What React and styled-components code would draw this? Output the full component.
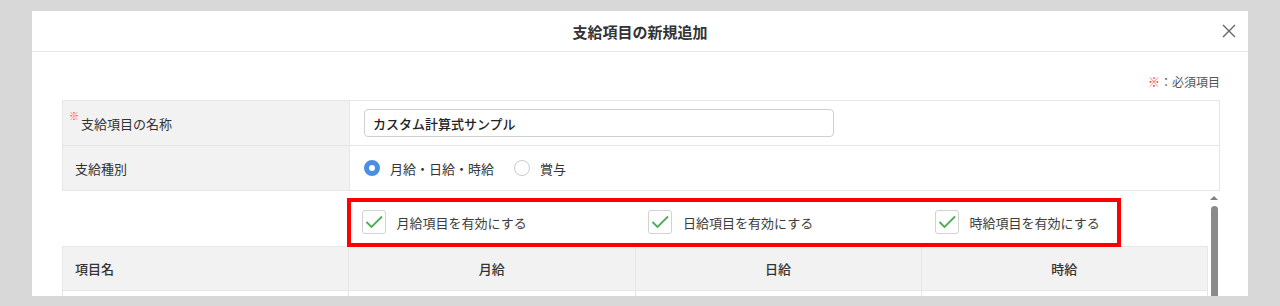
import React from 'react';
import styled, { createGlobalStyle } from 'styled-components';

const colors = {
  backdrop: '#d8d8d8',
  border: '#e6e6e6',
  cell: '#f2f2f2',
  text: '#333333',
  muted: '#555555',
  required: '#ff3b3b',
  blue: '#4a90e2',
  green: '#4cae50',
  highlight: '#ff0000',
};

const GlobalStyle = createGlobalStyle`
  html, body {
    margin: 0;
    padding: 0;
    background: ${colors.backdrop};
  }
  body {
    font-family: "Noto Sans CJK JP", "Noto Sans", sans-serif;
    color: ${colors.text};
  }
`;

const Backdrop = styled.div`
  height: 306px;
  box-sizing: border-box;
  padding: 11px 32px 10px;
  display: flex;
  overflow: hidden;
`;

const Modal = styled.div`
  flex: 1;
  background: #fff;
  display: flex;
  flex-direction: column;
  overflow: hidden;
`;

const Header = styled.header`
  height: 40px;
  flex-shrink: 0;
  display: grid;
  grid-template-columns: 1fr auto 1fr;
  align-items: center;
  border-bottom: 1px solid ${colors.border};
`;

const Title = styled.h2`
  grid-column: 2;
  margin: 0;
  font-size: 15px;
  font-weight: 700;
  color: ${colors.text};
`;

const CloseButton = styled.button`
  grid-column: 3;
  justify-self: end;
  margin-right: 12px;
  width: 14px;
  height: 14px;
  padding: 0;
  border: none;
  background: none;
  display: flex;
`;

const Body = styled.div`
  flex: 1;
  min-height: 0;
  padding: 0 28px 0 30px;
  display: flex;
  flex-direction: column;
`;

const RequiredNote = styled.p`
  margin: 21px 0 9px;
  line-height: 18px;
  font-size: 12px;
  text-align: right;
  color: ${colors.muted};
`;

const Mark = styled.span`
  color: ${colors.required};
  font-size: ${(p) => (p.$small ? '10px' : 'inherit')};
  align-self: ${(p) => (p.$small ? 'flex-start' : 'auto')};
  margin-top: ${(p) => (p.$small ? '10px' : '0')};
  line-height: 1;
`;

const FormTable = styled.div`
  flex-shrink: 0;
  border: 1px solid ${colors.border};
`;

const FormRow = styled.div`
  display: grid;
  grid-template-columns: 287px 1fr;
  height: 44px;
  & + & {
    border-top: 1px solid ${colors.border};
  }
`;

const Label = styled.div`
  background: ${colors.cell};
  border-right: 1px solid ${colors.border};
  display: flex;
  align-items: center;
  padding-left: ${(p) => (p.$required ? '6px' : '12px')};
  gap: 2px;
  font-size: 13px;
  color: ${colors.text};
`;

const Value = styled.div`
  display: flex;
  align-items: center;
  padding-left: 14px;
`;

const TextInput = styled.input`
  width: 470px;
  height: 28px;
  box-sizing: border-box;
  border: 1px solid #cfcfcf;
  border-radius: 4px;
  padding: 0 8px;
  font-family: inherit;
  font-size: 13px;
  font-weight: 500;
  color: #222;
  outline: none;
`;

const RadioGroup = styled.div`
  display: flex;
  align-items: center;
  gap: 20px;
`;

const RadioLabel = styled.label`
  display: flex;
  align-items: center;
  gap: 10px;
  font-size: 13px;
  color: ${colors.text};
`;

const RadioDot = styled.span`
  width: 16px;
  height: 16px;
  box-sizing: border-box;
  border-radius: 50%;
  border: ${(p) => (p.$checked ? `5px solid ${colors.blue}` : '1px solid #cbcbcb')};
  background: #fff;
`;

const ScrollArea = styled.div`
  flex: 1;
  min-height: 0;
  display: flex;
  padding-top: 7px;
  overflow: hidden;
`;

const ScrollContent = styled.div`
  flex: 1;
  display: flex;
  flex-direction: column;
`;

const CheckRow = styled.div`
  position: relative;
  flex-shrink: 0;
  display: grid;
  grid-template-columns: repeat(4, 1fr);
  height: 48px;
`;

const Highlight = styled.div`
  position: absolute;
  left: calc(25% - 2px);
  top: 0;
  width: 774px;
  height: 49px;
  box-sizing: border-box;
  border: 4px solid ${colors.highlight};
  pointer-events: none;
`;

const CheckCell = styled.label`
  display: flex;
  align-items: center;
  gap: 11px;
  padding-left: 13px;
  font-size: 13px;
  color: #3c3c3c;
`;

const CheckBox = styled.span`
  width: 24px;
  height: 24px;
  box-sizing: border-box;
  border: 1px solid #d2d2d2;
  border-radius: 3px;
  background: #fff;
  display: flex;
  align-items: center;
  justify-content: center;
`;

const GridTable = styled.div`
  flex-shrink: 0;
  display: grid;
  grid-template-columns: repeat(4, 1fr);
  border-top: 1px solid ${colors.border};
  border-left: 1px solid ${colors.border};
`;

const HeadCell = styled.div`
  height: 43px;
  background: ${colors.cell};
  border-right: 1px solid ${colors.border};
  border-bottom: 1px solid ${colors.border};
  display: flex;
  align-items: center;
  justify-content: ${(p) => (p.$left ? 'flex-start' : 'center')};
  padding-left: ${(p) => (p.$left ? '12px' : '0')};
  font-size: 13px;
  font-weight: 500;
  color: ${colors.text};
`;

const BodyCell = styled.div`
  height: 40px;
  background: #fff;
  border-right: 1px solid ${colors.border};
  border-bottom: 1px solid ${colors.border};
`;

const ScrollBar = styled.div`
  width: 12px;
  margin-top: -5px;
  display: flex;
  flex-direction: column;
  align-items: center;
`;

const ScrollArrow = styled.span`
  margin-top: 3px;
  width: 0;
  height: 0;
  border-left: 4px solid transparent;
  border-right: 4px solid transparent;
  border-bottom: 4px solid #808080;
`;

const ScrollThumb = styled.span`
  margin-top: 6px;
  width: 7px;
  flex: 1;
  background: #8a8a8a;
  border-radius: 4px 4px 0 0;
`;

function CheckIcon() {
  return (
    <svg width="20" height="20" viewBox="0 0 20 20">
      <polyline
        points="2.5,10 7.5,15 18,4.5"
        fill="none"
        stroke={colors.green}
        strokeWidth="1.8"
      />
    </svg>
  );
}

function CloseIcon() {
  return (
    <svg width="14" height="14" viewBox="0 0 14 14">
      <path d="M1 1 L13 13 M13 1 L1 13" stroke="#666" strokeWidth="1.4" />
    </svg>
  );
}

const toggles = ['月給項目を有効にする', '日給項目を有効にする', '時給項目を有効にする'];
const columns = ['項目名', '月給', '日給', '時給'];

function App() {
  return (
    <>
      <GlobalStyle />
      <Backdrop>
        <Modal>
          <Header>
            <Title>支給項目の新規追加</Title>
            <CloseButton aria-label="閉じる">
              <CloseIcon />
            </CloseButton>
          </Header>
          <Body>
            <RequiredNote>
              <Mark>※</Mark>：必須項目
            </RequiredNote>
            <FormTable>
              <FormRow>
                <Label $required>
                  <Mark $small>※</Mark>
                  支給項目の名称
                </Label>
                <Value>
                  <TextInput defaultValue="カスタム計算式サンプル" />
                </Value>
              </FormRow>
              <FormRow>
                <Label>支給種別</Label>
                <Value>
                  <RadioGroup>
                    <RadioLabel>
                      <RadioDot $checked />
                      月給・日給・時給
                    </RadioLabel>
                    <RadioLabel>
                      <RadioDot />
                      賞与
                    </RadioLabel>
                  </RadioGroup>
                </Value>
              </FormRow>
            </FormTable>
            <ScrollArea>
              <ScrollContent>
                <CheckRow>
                  <div />
                  {toggles.map((t) => (
                    <CheckCell key={t}>
                      <CheckBox>
                        <CheckIcon />
                      </CheckBox>
                      {t}
                    </CheckCell>
                  ))}
                  <Highlight />
                </CheckRow>
                <GridTable>
                  {columns.map((c, i) => (
                    <HeadCell key={c} $left={i === 0}>
                      {c}
                    </HeadCell>
                  ))}
                  {columns.map((c) => (
                    <BodyCell key={`row-${c}`} />
                  ))}
                </GridTable>
              </ScrollContent>
              <ScrollBar>
                <ScrollArrow />
                <ScrollThumb />
              </ScrollBar>
            </ScrollArea>
          </Body>
        </Modal>
      </Backdrop>
    </>
  );
}

export default App;
